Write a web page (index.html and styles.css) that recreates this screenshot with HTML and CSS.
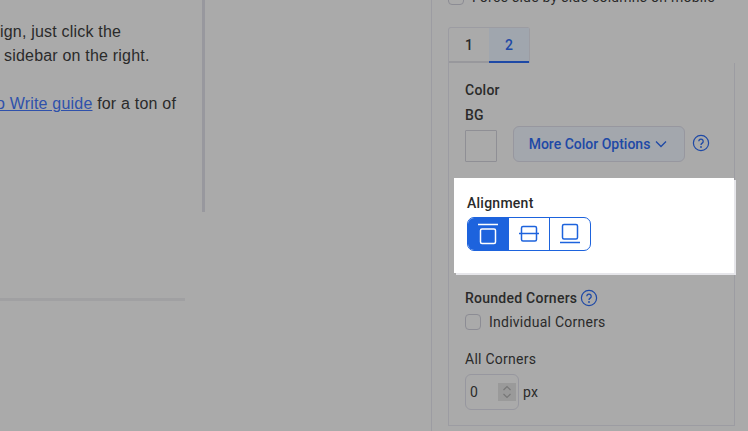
FILE: index.html
```html
<!DOCTYPE html>
<html lang="en">
<head>
<meta charset="utf-8">
<title>Column settings</title>
<link rel="stylesheet" href="styles.css">
</head>
<body>
<div class="page">
  <main class="main">
    <div class="content">
      <p class="line l1">To edit this design, just click the</p>
      <p class="line l2">in the sidebar on the right.</p>
      <p class="line l3"><a href="#">How to Write guide</a> for a ton of</p>
    </div>
    <div class="rule"></div>
  </main>
  <aside class="side">
    <label class="check top-check"><span class="box"></span><span>Force side by side columns on mobile</span></label>
    <div class="tabs">
      <div class="tab">1</div>
      <div class="tab active">2</div>
    </div>
    <div class="panel">
      <div class="heading color-h">Color</div>
      <div class="heading bg-h">BG</div>
      <div class="color-row">
        <div class="swatch"></div>
        <button class="more">More Color Options
          <svg width="12" height="8" viewBox="0 0 12 8"><path d="M1 1.5l5 5 5-5" fill="none" stroke="currentColor" stroke-width="1.3"/></svg>
        </button>
        <svg class="help" width="18" height="18" viewBox="0 0 18 18"><circle cx="9" cy="9" r="7.6" fill="none" stroke="currentColor" stroke-width="1.2"/><path d="M6.8 7.2a2.2 2.2 0 1 1 3.4 1.9c-.8.5-1.2.9-1.2 1.8" fill="none" stroke="currentColor" stroke-width="1.3"/><circle cx="9" cy="13" r=".9" fill="currentColor"/></svg>
      </div>
      <section class="align">
        <div class="heading">Alignment</div>
        <div class="seg">
          <div class="seg-btn on">
            <svg width="22" height="22" viewBox="0 0 22 22"><path d="M1 1.500h20" stroke="currentColor" stroke-width="1.400" fill="none"/><rect x="3.500" y="6" width="15" height="14.500" rx="1.500" fill="none" stroke="currentColor" stroke-width="1.500"/></svg>
          </div>
          <div class="seg-btn">
            <svg width="22" height="22" viewBox="0 0 22 22"><path d="M1 10.500h20" stroke="currentColor" stroke-width="1.500" fill="none"/><rect x="3.500" y="3.500" width="15" height="14.500" rx="1.500" fill="none" stroke="currentColor" stroke-width="1.500"/></svg>
          </div>
          <div class="seg-btn">
            <svg width="22" height="22" viewBox="0 0 22 22"><path d="M1 19.500h20" stroke="currentColor" stroke-width="1.400" fill="none"/><rect x="3.500" y="1.500" width="15" height="14.500" rx="1.500" fill="none" stroke="currentColor" stroke-width="1.500"/></svg>
          </div>
        </div>
      </section>
      <div class="heading rc">Rounded Corners
        <svg class="help" width="18" height="18" viewBox="0 0 18 18"><circle cx="9" cy="9" r="7.6" fill="none" stroke="currentColor" stroke-width="1.2"/><path d="M6.800 7.200a2.200 2.200 0 1 1 3.400 1.900c-.8.5-1.200.9-1.200 1.800" fill="none" stroke="currentColor" stroke-width="1.300"/><circle cx="9" cy="13" r=".9" fill="currentColor"/></svg>
      </div>
      <label class="check ind"><span class="box"></span><span>Individual Corners</span></label>
      <div class="all">All Corners</div>
      <div class="num-row">
        <div class="num"><span>0</span>
          <span class="spin"><svg width="18" height="18" viewBox="0 0 18 18"><path d="M5.500 7l3.500-3.500L12.500 7M5.500 11L9 14.500l3.500-3.500" fill="none" stroke="#777" stroke-width="1.200"/></svg></span>
        </div>
        <span>px</span>
      </div>
    </div>
  </aside>
</div>
</body>
</html>
```
FILE: styles.css
```css
* { box-sizing: border-box; }
html, body { margin: 0; height: 100%; }
body { background: #aaaaaa; overflow: hidden; }
.page { display: flex; width: 748px; height: 431px; overflow: hidden; color: #2a2a2a; font-family: Roboto, sans-serif; font-size: 14px; }
.main { width: 432px; flex: none; border-right: 1px solid #9c9ca2; }
.content { width: 205px; height: 212px; border-right: 3px solid #98989e; padding-top: 20px; font-family: "Liberation Sans", sans-serif; font-size: 16px; line-height: 24px; letter-spacing: .2px; }
.line { margin: 0; white-space: nowrap; }
.l1 { margin-left: -110px; }
.l2 { margin-left: -41px; }
.l3 { margin-left: -46px; margin-top: 24px; }
.line a { color: #2f51ab; }
.rule { width: 185px; height: 3px; margin-top: 86px; background: #a0a0a2; }
.side { flex: 1; margin-top: -11px; padding-left: 16px; letter-spacing: .25px; }
.check { display: flex; align-items: center; gap: 8px; }
.box { width: 16px; height: 16px; border: 1px solid #8c8c94; border-radius: 4px; flex: none; }
.tabs { display: flex; margin-top: 22px; width: 82px; border: 1px solid #9c9ca2; border-bottom: 0; border-radius: 3px 3px 0 0; }
.tab { width: 40px; height: 35px; display: flex; align-items: center; justify-content: center; font-weight: 500; border-bottom: 2px solid #98989c; }
.tab.active { background: #a0a6ae; color: #1e49a6; border-bottom-color: #1e49a6; }
.panel { width: 287px; height: 363px; border: 1px solid #9c9ca2; border-top: 0; padding: 18px 0 0 16px; }
.heading { font-weight: 500; line-height: 18px; }
.bg-h { margin-top: 7px; }
.color-row { display: flex; align-items: flex-end; margin-top: 2px; }
.swatch { width: 32px; height: 32px; border: 1px solid #8f8f95; border-radius: 1px; }
.more { display: flex; align-items: center; justify-content: center; gap: 5px; width: 172px; height: 36px; margin-left: 16px; padding: 0 7px 1px 5px; background: #a3a7ad; border: 1px solid #97979f; border-radius: 6px; color: #1e49a6; font: 500 14px Roboto, sans-serif; }
.color-row .help { margin: 0 0 10px 7px; }
.help { color: #1e49a6; flex: none; }
.align { width: 280px; margin: 16px 0 0 -11px; padding: 16px 0 22px 13px; background: #fff; color: #2a2a2a; box-shadow: 2px 2px 0 #e6e6ea; }
.seg { display: flex; width: 124px; height: 34px; margin-top: 5px; border: 1px solid #1d63dd; border-radius: 7px; overflow: hidden; }
.seg-btn { flex: 1; display: flex; align-items: center; justify-content: center; color: #1d63dd; }
.seg-btn + .seg-btn { border-left: 1px solid #1d63dd; }
.seg-btn.on { background: #1d63dd; color: #fff; flex: none; width: 40px; }
.rc { display: flex; align-items: center; gap: 3px; margin-top: 16px; }
.ind { margin-top: 7px; }
.all { margin-top: 20px; line-height: 18px; }
.num-row { display: flex; align-items: center; gap: 4px; margin-top: 6px; }
.num { display: flex; align-items: center; justify-content: space-between; width: 54px; height: 36px; padding: 0 2px 0 4px; border: 1px solid #97979f; border-radius: 6px; }
.spin { display: flex; width: 18px; height: 18px; background: #9a9a9a; }
```
